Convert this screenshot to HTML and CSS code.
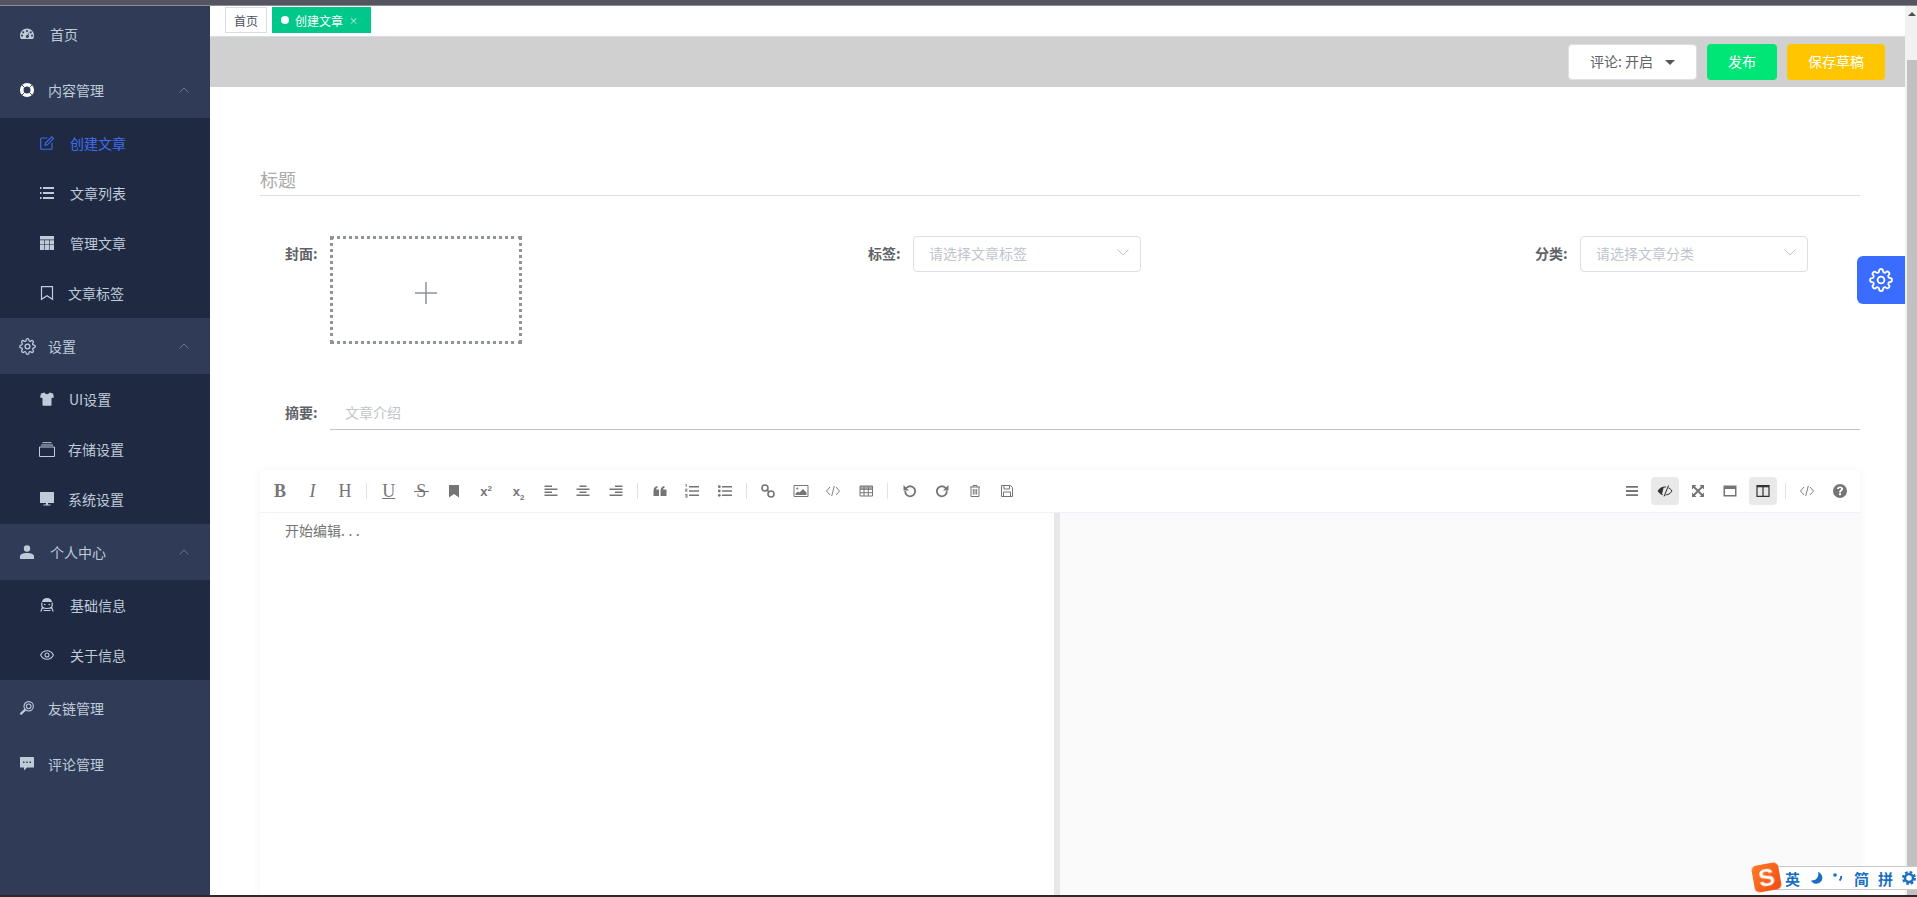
FILE: index.html
```html
<!DOCTYPE html>
<html lang="zh-CN">
<head>
    <meta charset="UTF-8">
    <title>创建文章</title>
    <link rel="stylesheet" href="styles.css">
</head>
<body>
    <svg class="sprite" xmlns="http://www.w3.org/2000/svg">
        <symbol id="i-gear" viewBox="0 0 24 24"><circle cx="12" cy="12" r="3.4" fill="none" stroke="currentColor" stroke-width="1.8"/><path fill="none" stroke="currentColor" stroke-width="1.8" d="M19.4 15a1.65 1.65 0 0 0 .33 1.82l.06.06a2 2 0 0 1-2.83 2.83l-.06-.06a1.65 1.65 0 0 0-1.82-.33 1.65 1.65 0 0 0-1 1.51V21a2 2 0 0 1-4 0v-.09A1.65 1.65 0 0 0 9 19.4a1.65 1.65 0 0 0-1.82.33l-.06.06a2 2 0 0 1-2.83-2.83l.06-.06a1.65 1.65 0 0 0 .33-1.82 1.65 1.65 0 0 0-1.51-1H3a2 2 0 0 1 0-4h.09A1.65 1.65 0 0 0 4.6 9a1.65 1.65 0 0 0-.33-1.82l-.06-.06a2 2 0 0 1 2.83-2.83l.06.06a1.65 1.65 0 0 0 1.82.33H9a1.65 1.65 0 0 0 1-1.51V3a2 2 0 0 1 4 0v.09a1.65 1.65 0 0 0 1 1.51 1.65 1.65 0 0 0 1.82-.33l.06-.06a2 2 0 0 1 2.83 2.83l-.06.06a1.65 1.65 0 0 0-.33 1.82V9a1.65 1.65 0 0 0 1.51 1H21a2 2 0 0 1 0 4h-.09a1.65 1.65 0 0 0-1.51 1z"/></symbol>
        <symbol id="i-chevron" viewBox="0 0 10 6"><path d="M.5 5.5 5 1l4.5 4.5" fill="none" stroke="currentColor"/></symbol>
        <symbol id="i-code" viewBox="0 0 16 16"><path d="M5 4 1.5 8 5 12M11 4l3.5 4-3.5 4M9.3 3 6.700 13" fill="none" stroke="currentColor"/></symbol>
    </svg>

    <div class="top-strip"></div>

    <div class="app">
        <aside class="sidebar">
            <a class="nav-item">
                <svg class="nav-icon" viewBox="0 0 14 14"><path fill="currentColor" fill-rule="evenodd" d="M7 1.500a7 7 0 0 1 7 7c0 1.500-.4 2.700-1 3.500H1c-.6-.8-1-2-1-3.500a7 7 0 0 1 7-7zM3.200 4.300a1 1 0 1 0 .01 0zM7 3a1 1 0 1 0 .01 0zM10.800 4.300a1 1 0 1 0 .01 0zM2 7.500a1 1 0 1 0 .01 0zM12 7.500a1 1 0 1 0 .01 0zM9.500 4.800 7.500 8a1.500 1.500 0 1 0 1 .5z"/></svg>
                <span>首页</span>
            </a>

            <a class="nav-item gap-s is-open">
                <svg class="nav-icon" viewBox="0 0 14 14"><circle cx="7" cy="7" r="5.300" fill="none" stroke="#fff" stroke-width="3.600"/><path d="m1.500 1.500 3 3M12.500 1.500l-3 3M1.500 12.500l3-3M12.500 12.500l-3-3" stroke="#2f3b57" stroke-width=".9"/></svg>
                <span>内容管理</span>
                <svg class="chevron"><use href="#i-chevron"/></svg>
            </a>
            <div class="submenu">
                <a class="sub-item is-active">
                    <svg class="nav-icon" viewBox="0 0 14 14"><path d="M7.500 2H1.700a1 1 0 0 0-1 1v9.300a1 1 0 0 0 1 1H11a1 1 0 0 0 1-1V7" fill="none" stroke="currentColor" stroke-width="1.100"/><path d="M5 9.300 5.500 7l6.200-6.200 1.800 1.800L7.300 8.800z" fill="none" stroke="currentColor" stroke-width="1.100"/></svg>
                    <span>创建文章</span>
                </a>
                <a class="sub-item">
                    <svg class="nav-icon" viewBox="0 0 14 14"><path fill="currentColor" d="M0 1h1.500v2H0zM3 1h11v2H3zM0 6h1.500v2H0zM3 6h11v2H3zM0 11h1.500v2H0zM3 11h11v2H3z"/></svg>
                    <span>文章列表</span>
                </a>
                <a class="sub-item">
                    <svg class="nav-icon" viewBox="0 0 14 14"><path fill="currentColor" d="M0 0h14v3.500H0zM0 4.200h4.300v4.300H0zM4.900 4.200h4.200v4.300H4.900zM9.700 4.200H14v4.300H9.700zM0 9.100h4.300V14H0zM4.900 9.100h4.200V14H4.900zM9.700 9.100H14V14H9.700z"/></svg>
                    <span>管理文章</span>
                </a>
                <a class="sub-item gap-s">
                    <svg class="nav-icon" viewBox="0 0 14 14"><path d="M1.500.7h11v12.600L7 9.800l-5.500 3.500z" fill="none" stroke="currentColor" stroke-width="1.200"/></svg>
                    <span>文章标签</span>
                </a>
            </div>

            <a class="nav-item gap-s is-open">
                <svg class="nav-icon nav-icon-gear"><use href="#i-gear"/></svg>
                <span>设置</span>
                <svg class="chevron"><use href="#i-chevron"/></svg>
            </a>
            <div class="submenu">
                <a class="sub-item gap-m">
                    <svg class="nav-icon" viewBox="0 0 14 14"><path fill="currentColor" d="M4.500.5C5 1.700 6 2.200 7 2.200S9 1.700 9.500.5L13 1.500 14 5.500l-2.500.5V13a.7.7 0 0 1-.7.700H3.200A.7.7 0 0 1 2.500 13V6L0 5.500l1-4z"/></svg>
                    <span>UI设置</span>
                </a>
                <a class="sub-item gap-s">
                    <svg class="nav-icon nav-icon-wide" viewBox="0 0 16 15"><path d="M.5 5h15v9.500H.5zM2 3h12M3.500 .7h9" fill="none" stroke="currentColor"/></svg>
                    <span>存储设置</span>
                </a>
                <a class="sub-item gap-s">
                    <svg class="nav-icon" viewBox="0 0 14 14"><path fill="currentColor" d="M.5 0h13a.5.5 0 0 1 .5.500V10.500a.5.500 0 0 1-.5.500H8v1.500h2.500v1h-7v-1H6V11H.5a.5.500 0 0 1-.5-.500V.5A.5.5 0 0 1 .5 0z"/></svg>
                    <span>系统设置</span>
                </a>
            </div>

            <a class="nav-item is-open">
                <svg class="nav-icon" viewBox="0 0 14 14"><circle cx="7" cy="3.500" r="3.200" fill="currentColor"/><path fill="currentColor" d="M0 14v-2.500C0 9.300 2.500 8 7 8s7 1.300 7 3.500V14z"/></svg>
                <span>个人中心</span>
                <svg class="chevron"><use href="#i-chevron"/></svg>
            </a>
            <div class="submenu">
                <a class="sub-item">
                    <svg class="nav-icon" viewBox="0 0 14 14"><path fill="currentColor" d="M7 0c3 0 5 1.700 5 4H2c0-2.300 2-4 5-4z"/><path d="M1.800 4.500v3c0 1.800 2 3 5.200 3s5.200-1.200 5.200-3v-3M2.500 9 .8 13.500M11.500 9l1.700 4.500M3.500 12.500h7" fill="none" stroke="currentColor" stroke-width="1.200"/><circle cx="4.700" cy="6.500" r=".8" fill="currentColor"/><circle cx="9.300" cy="6.500" r=".8" fill="currentColor"/></svg>
                    <span>基础信息</span>
                </a>
                <a class="sub-item">
                    <svg class="nav-icon" viewBox="0 0 14 14"><path d="M.6 7C2 4.200 4.300 2.800 7 2.800s5 1.400 6.400 4.200C12 9.800 9.700 11.200 7 11.200S2 9.800.6 7z" fill="none" stroke="currentColor" stroke-width="1.100"/><circle cx="7" cy="7" r="2" fill="none" stroke="currentColor" stroke-width="1.100"/></svg>
                    <span>关于信息</span>
                </a>
            </div>

            <a class="nav-item gap-s">
                <svg class="nav-icon" viewBox="0 0 15 15"><circle cx="9.300" cy="5.700" r="5" fill="none" stroke="currentColor" stroke-width="1.200"/><circle cx="9.300" cy="5.700" r="2.500" fill="none" stroke="currentColor" stroke-width="1.100"/><path d="M5.500 9.300 1.200 13.500" stroke="currentColor" stroke-width="2.400" stroke-linecap="round"/></svg>
                <span>友链管理</span>
            </a>
            <a class="nav-item gap-s">
                <svg class="nav-icon" viewBox="0 0 14 14"><path fill="currentColor" fill-rule="evenodd" d="M.5 0h13a.5.5 0 0 1 .5.500V10a.5.500 0 0 1-.5.500H7L4 13.500V10.500H.5A.5.500 0 0 1 0 10V.5A.5.500 0 0 1 .5 0zM3 4.500v1.500h1.500V4.500zM6.200 4.500v1.500h1.500V4.500zM9.500 4.500v1.500H11V4.500z"/></svg>
                <span>评论管理</span>
            </a>
        </aside>

        <main class="main">
            <div class="tabs">
                <span class="tab">首页</span>
                <span class="tab tab-active"><i class="tab-dot"></i>创建文章<i class="tab-close">×</i></span>
            </div>

            <div class="action-bar">
                <div class="comment-select">评论: 开启<i class="caret"></i></div>
                <button class="btn btn-publish">发布</button>
                <button class="btn btn-draft">保存草稿</button>
            </div>

            <div class="content">
                <div class="title-input">标题</div>

                <div class="meta-row">
                    <div class="field">
                        <label class="field-label">封面:</label>
                        <div class="cover-box">
                            <svg class="cover-plus" viewBox="0 0 24 24"><path d="M12 1v22M1 12h22" stroke="currentColor" stroke-width="1.500"/></svg>
                        </div>
                    </div>
                    <div class="field">
                        <label class="field-label">标签:</label>
                        <div class="select">请选择文章标签<svg class="select-arrow" viewBox="0 0 12 7"><path d="m.5.5 5.500 5.500L11.500.5" fill="none" stroke="currentColor"/></svg></div>
                    </div>
                    <div class="field">
                        <label class="field-label">分类:</label>
                        <div class="select">请选择文章分类<svg class="select-arrow" viewBox="0 0 12 7"><path d="m.5.5 5.500 5.500L11.500.5" fill="none" stroke="currentColor"/></svg></div>
                    </div>
                </div>

                <div class="field summary-row">
                    <label class="field-label">摘要:</label>
                    <div class="summary-input">文章介绍</div>
                </div>

                <div class="editor">
                    <div class="editor-toolbar">
                        <div class="tool-group">
                            <span class="tool tool-b">B</span>
                            <span class="tool tool-i">I</span>
                            <span class="tool tool-h">H</span>
                            <i class="tool-sep"></i>
                            <span class="tool tool-u">U</span>
                            <span class="tool tool-s">S</span>
                            <span class="tool"><svg viewBox="0 0 16 16"><path fill="currentColor" d="M3 2h10v12.500l-5-3.500-5 3.500z"/></svg></span>
                            <span class="tool tool-x"><span>x<sup>2</sup></span></span>
                            <span class="tool tool-x"><span>x<sub>2</sub></span></span>
                            <span class="tool"><svg viewBox="0 0 16 16"><path fill="currentColor" d="M1.500 2.500H9V4H1.500zM1.500 5.500h13V7h-13zM1.500 8.500H9V10H1.500zM1.500 11.500h13V13h-13z"/></svg></span>
                            <span class="tool"><svg viewBox="0 0 16 16"><path fill="currentColor" d="M4.500 2.500h7V4h-7zM1.500 5.500h13V7h-13zM4.500 8.500h7V10h-7zM1.500 11.500h13V13h-13z"/></svg></span>
                            <span class="tool"><svg viewBox="0 0 16 16"><path fill="currentColor" d="M7 2.500h7.500V4H7zM1.500 5.500h13V7h-13zM7 8.500h7.500V10H7zM1.500 11.500h13V13h-13z"/></svg></span>
                            <i class="tool-sep"></i>
                            <span class="tool"><svg viewBox="0 0 16 16"><path fill="currentColor" d="M1.500 8c0-3 1.500-4.700 4-5v1.800C4.500 5 4 5.700 4 6.500h3V13H1.500zM8.500 8c0-3 1.500-4.700 4-5v1.800c-1 .2-1.500.9-1.500 1.700h3.500V13h-6z"/></svg></span>
                            <span class="tool"><svg viewBox="0 0 16 16"><path fill="currentColor" d="M5 3h10v1.500H5zM5 7.200h10v1.500H5zM5 11.500h10V13H5zM1.500 1h1.200v3H1.800V2H1.500zM1 5.800h2.500v.8l-1.500 1h1.500v.8H1v-.8l1.500-1H1zM1 11h2.500v3.600H1v-.8h1.600v-.6H1.500v-.7h1.100v-.7H1z"/></svg></span>
                            <span class="tool"><svg viewBox="0 0 16 16"><path fill="currentColor" d="M5 3h10v1.500H5zM5 7.200h10v1.500H5zM5 11.500h10V13H5z"/><circle cx="2.300" cy="3.700" r="1.400" fill="currentColor"/><circle cx="2.300" cy="8" r="1.400" fill="currentColor"/><circle cx="2.300" cy="12.300" r="1.400" fill="currentColor"/></svg></span>
                            <i class="tool-sep"></i>
                            <span class="tool"><svg viewBox="0 0 16 16"><circle cx="5" cy="5" r="3" fill="none" stroke="currentColor" stroke-width="1.600"/><circle cx="11" cy="11" r="3" fill="none" stroke="currentColor" stroke-width="1.600"/><path d="m6.500 6.500 3 3" stroke="currentColor" stroke-width="1.600"/></svg></span>
                            <span class="tool"><svg viewBox="0 0 16 16"><path d="M1 2.500h14v11H1z" fill="none" stroke="currentColor"/><circle cx="4.300" cy="5.500" r="1.100" fill="currentColor"/><path fill="currentColor" d="M2.500 12v-1.500l2.500-2 1.500 1 3.500-3.500 3.500 3.500V12z"/></svg></span>
                            <span class="tool tool-thin"><svg><use href="#i-code"/></svg></span>
                            <span class="tool"><svg viewBox="0 0 16 16"><path d="M2 3h12.500v10H2zM2 6.300h12.500M2 9.700h12.500M6 3.500v9.500M10.300 3.500v9.500" fill="none" stroke="currentColor"/><path fill="currentColor" d="M2 3h12.500v3H2z" opacity=".6"/></svg></span>
                            <i class="tool-sep"></i>
                            <span class="tool"><svg viewBox="0 0 16 16"><path d="M3.200 8a5 5 0 1 0 1.600-3.400L3.200 6" fill="none" stroke="currentColor" stroke-width="1.800"/><path fill="currentColor" d="M1.500 2v5.500H7z"/></svg></span>
                            <span class="tool"><svg viewBox="0 0 16 16"><path d="M12.800 8a5 5 0 1 1-1.600-3.400L12.800 6" fill="none" stroke="currentColor" stroke-width="1.800"/><path fill="currentColor" d="M14.500 2v5.500H9z"/></svg></span>
                            <span class="tool"><svg viewBox="0 0 16 16"><path d="M3 4h10M6 4V2.500h4V4M4 4v9.500h8V4M6.300 6v5.500M8 6v5.500M9.700 6v5.500" fill="none" stroke="currentColor"/></svg></span>
                            <span class="tool"><svg viewBox="0 0 16 16"><path d="M2.500 2.500h9l2 2v9h-11zM5 2.500v3.500h5.500V2.500M4.500 13.500V9h7v4.500" fill="none" stroke="currentColor"/></svg></span>
                        </div>
                        <div class="tool-group tool-group-right">
                            <span class="tool"><svg viewBox="0 0 16 16"><path fill="currentColor" d="M2 3h12v1.800H2zM2 7.100h12v1.800H2zM2 11.200h12V13H2z"/></svg></span>
                            <span class="tool tool-on"><svg viewBox="0 0 16 16"><path d="M1 8c1.500-2.500 4-4 7-4s5.500 1.500 7 4c-1.500 2.500-4 4-7 4s-5.500-1.500-7-4z" fill="none" stroke="currentColor"/><path fill="currentColor" d="M1 8c1.300-2.200 3.300-3.600 5.800-3.900L4.900 11.200C3.300 10.700 2 9.500 1 8z"/><path d="M11 2.500 6.500 13.500" stroke="#e9e9e9" stroke-width="2.500"/><path d="M11.500 2.500 7 13.500" stroke="currentColor"/></svg></span>
                            <span class="tool"><svg viewBox="0 0 16 16"><path d="m3.500 3.500 9 9M12.500 3.500l-9 9" stroke="currentColor" stroke-width="2"/><path fill="currentColor" d="M2 2h4.500L2 6.500zM14 2v4.500L9.500 2zM2 14V9.500L6.500 14zM14 14H9.500L14 9.500z"/></svg></span>
                            <span class="tool"><svg viewBox="0 0 16 16"><path fill="currentColor" fill-rule="evenodd" d="M1.500 2.500h13v11h-13zM3 6v6h10V6z"/></svg></span>
                            <span class="tool tool-on"><svg viewBox="0 0 16 16"><path d="M2 2.700h12v10.600H2zM8 3v10" fill="none" stroke="#333" stroke-width="1.200"/><path d="M2 2.700h12v1.600H2z" fill="#333"/></svg></span>
                            <i class="tool-sep"></i>
                            <span class="tool tool-thin"><svg><use href="#i-code"/></svg></span>
                            <span class="tool"><svg viewBox="0 0 16 16"><path fill="currentColor" fill-rule="evenodd" d="M8 1a7 7 0 1 1 0 14A7 7 0 0 1 8 1zM7 10.300v1.900h2v-1.900zM8 3.500c-1.700 0-2.900 1-3 2.600h1.900c.1-.6.500-1 1.100-1 .6 0 1 .4 1 .9 0 1-2 1.300-2 3.400H9c0-1.400 2.100-1.700 2.100-3.600C11.100 4.500 9.800 3.500 8 3.500z"/></svg></span>
                        </div>
                    </div>
                    <div class="editor-body">
                        <div class="editor-input">开始编辑<span class="dots">...</span></div>
                        <div class="editor-preview"></div>
                    </div>
                </div>
            </div>

            <div class="settings-fab"><svg><use href="#i-gear"/></svg></div>
        </main>

        <div class="scrollbar">
            <i class="scroll-up"></i>
            <div class="scroll-thumb"></div>
        </div>
    </div>

    <div class="bottom-strip"></div>

    <div class="ime-bar">
        <span class="ime-logo"><b>S</b></span>
        <span class="ime-item">英</span>
        <svg class="ime-moon" viewBox="0 0 14 14"><path fill="currentColor" d="M8 1A6 6 0 1 1 1 9.500 6.500 6.500 0 0 0 8 1z"/></svg>
        <svg class="ime-punct" viewBox="0 0 10 12"><circle cx="2" cy="3" r="1.800" fill="currentColor"/><path d="M8 4c.5 2-.3 3.500-1.500 4.500" fill="none" stroke="currentColor" stroke-width="1.800"/></svg>
        <span class="ime-item">简</span>
        <span class="ime-item">拼</span>
        <svg class="ime-gear" viewBox="0 0 14 14"><circle cx="7" cy="7" r="4" fill="none" stroke="currentColor" stroke-width="2.500"/><circle cx="7" cy="7" r="6" fill="none" stroke="currentColor" stroke-width="2" stroke-dasharray="2.700 2"/></svg>
    </div>
</body>
</html>
```

FILE: styles.css
```css
* {
    margin: 0;
    padding: 0;
    box-sizing: border-box;
}

html, body {
    height: 100%;
    overflow: hidden;
}

body {
    display: flex;
    flex-direction: column;
    background: #fff;
    color: #606266;
    font-family: "Noto Sans CJK SC", "Liberation Sans", sans-serif;
    font-size: 14px;
}

i {
    font-style: normal;
}

.sprite {
    display: none;
}

.top-strip {
    height: 6px;
    flex: none;
    background: #55555f;
    border-bottom: 1px solid #8d8d94;
}

.bottom-strip {
    height: 2px;
    flex: none;
    background: #2b2b2b;
}

.app {
    flex: 1;
    display: flex;
    min-height: 0;
}

/* sidebar */
.sidebar {
    width: 210px;
    flex: none;
    background: #2f3b57;
    color: #bfcbd9;
}

.nav-item,
.sub-item {
    display: flex;
    align-items: center;
    gap: 16px;
}

.nav-item {
    height: 56px;
    padding-left: 20px;
    position: relative;
}

.sub-item {
    height: 50px;
    padding-left: 40px;
}

.nav-item.gap-s,
.sub-item.gap-s {
    gap: 14px;
}

.sub-item.gap-m {
    gap: 15px;
}

.submenu {
    background: #1f2a42;
}

.sub-item.is-active {
    color: #3f6df0;
}

.nav-icon {
    width: 14px;
    height: 14px;
    flex: none;
    overflow: visible;
    color: #bfcbd9;
}

.is-active .nav-icon {
    color: #3f6df0;
}

.nav-icon-gear {
    width: 17px;
    height: 17px;
    margin-left: -1px;
    margin-right: -2px;
}

.nav-icon-wide {
    width: 16px;
    height: 15px;
    margin-left: -1px;
    margin-right: -1px;
}

.chevron {
    position: absolute;
    left: 179px;
    top: 25px;
    width: 10px;
    height: 6px;
    color: #687388;
}

/* main area */
.main {
    flex: 1;
    min-width: 0;
    position: relative;
    overflow: hidden;
}

.tabs {
    height: 31px;
    display: flex;
    align-items: flex-start;
    gap: 5px;
    padding: 1px 0 0 15px;
    border-bottom: 1px solid #d8dce5;
}

.tab {
    height: 26px;
    display: flex;
    align-items: center;
    padding: 0 8px;
    border: 1px solid #d8dce5;
    font-size: 12px;
    color: #495060;
}

.tab-active {
    width: 99px;
    border-color: #00c78a;
    background: #00c78a;
    color: #fff;
}

.tab-dot {
    width: 8px;
    height: 8px;
    margin-right: 6px;
    border-radius: 50%;
    background: #fff;
}

.tab-close {
    margin-left: 6px;
    font-size: 9px;
    opacity: 0.8;
}

.action-bar {
    height: 50px;
    display: flex;
    align-items: center;
    justify-content: flex-end;
    gap: 10px;
    padding: 0 20px 0 0;
    background: #d0d0d0;
}

.comment-select {
    width: 129px;
    height: 36px;
    display: flex;
    align-items: center;
    padding: 0 0 2px 21px;
    background: #fff;
    border: 1px solid #dcdfe6;
    border-radius: 4px;
    color: #606266;
}

.caret {
    margin: 2px 0 0 12px;
    border-style: solid;
    border-width: 5px 5px 0;
    border-color: #555 transparent transparent;
}

.btn {
    height: 36px;
    padding-bottom: 2px;
    border: none;
    border-radius: 4px;
    color: #fff;
    font-family: inherit;
    font-size: 14px;
}

.btn-publish {
    width: 70px;
    background: #00e676;
}

.btn-draft {
    width: 98px;
    background: #ffc600;
}

.content {
    padding: 68px 45px 0 50px;
}

.title-input {
    height: 41px;
    padding-top: 11px;
    border-bottom: 1px solid #e0e0e0;
    font-size: 18px;
    line-height: 26px;
    color: #aaa;
}

.meta-row {
    display: grid;
    grid-template-columns: 583px 667px 1fr;
    margin-top: 40px;
    padding-left: 25px;
}

.meta-row .field-label {
    line-height: 34px;
}

.field {
    display: flex;
    align-items: flex-start;
    gap: 13px;
}

.field-label {
    width: 32px;
    flex: none;
    line-height: 36px;
    font-weight: 700;
    color: #606266;
    white-space: nowrap;
}

.cover-box {
    width: 192px;
    height: 108px;
    display: flex;
    align-items: center;
    justify-content: center;
    border: 3px dotted #8f939e;
}

.cover-plus {
    width: 24px;
    height: 24px;
    margin-top: 5px;
    color: #8f939e;
}

.select {
    width: 228px;
    height: 36px;
    display: flex;
    align-items: center;
    justify-content: space-between;
    padding: 0 11px 2px 15px;
    border: 1px solid #dcdfe6;
    border-radius: 4px;
    color: #c0c4cc;
}

.select-arrow {
    width: 12px;
    height: 7px;
    margin-bottom: 2px;
}

.summary-row {
    margin-top: 50px;
    padding-left: 25px;
    align-items: flex-end;
}

.summary-input {
    flex: 1;
    height: 34px;
    padding-left: 15px;
    border-bottom: 1px solid #c0c4cc;
    line-height: 32px;
    color: #c0c4cc;
}

.editor {
    height: 470px;
    margin-top: 40px;
    border-radius: 4px 4px 0 0;
    background: #fff;
    box-shadow: 0 0 10px rgba(0, 0, 0, 0.05);
}

.editor-toolbar {
    height: 43px;
    display: flex;
    align-items: center;
    justify-content: space-between;
    padding: 0 6px 0 6px;
    border-bottom: 1px solid #f1f1fb;
}

.tool-group {
    display: flex;
    align-items: center;
    gap: 4.45px;
}

.tool-group-right {
    gap: 4.7px;
}

.tool {
    width: 28px;
    height: 28px;
    display: flex;
    align-items: center;
    justify-content: center;
    border-radius: 4px;
    color: #757575;
    font-size: 16px;
    line-height: 1;
}

.tool svg {
    width: 16px;
    height: 16px;
}

.tool-b, .tool-i, .tool-h, .tool-u, .tool-s {
    font-family: "Liberation Serif", serif;
    font-size: 18px;
}

.tool-b {
    font-weight: 700;
}

.tool-i {
    font-style: italic;
}

.tool-u {
    text-decoration: underline;
}

.tool-s {
    background: linear-gradient(#757575, #757575) center / 15px 1px no-repeat;
}

.tool-x {
    font-family: "Liberation Sans", sans-serif;
    font-size: 13px;
    font-weight: 700;
}

.tool-x sup,
.tool-x sub {
    font-size: 8px;
    line-height: 0;
}

.tool-thin svg {
    color: #808080;
}

.tool-on {
    background: #e9e9e9;
    color: #333;
}

.tool-sep {
    width: 1px;
    height: 16px;
    margin: 0 3px;
    background: #e2e2e2;
}

.editor-body {
    height: calc(100% - 43px);
    display: flex;
}

.editor-input {
    width: 800px;
    padding: 6px 0 0 25px;
    border-right: 6px solid #e8e8e8;
    line-height: 22px;
    color: #757575;
}

.dots {
    letter-spacing: 3.5px;
}

.editor-preview {
    flex: 1;
    background: #fafafa;
}

.settings-fab {
    position: absolute;
    right: 0;
    top: 250px;
    width: 48px;
    height: 48px;
    display: flex;
    align-items: center;
    justify-content: center;
    border-radius: 6px 0 0 6px;
    background: #3a6cff;
    color: #fff;
}

.settings-fab svg {
    width: 24px;
    height: 24px;
}

/* scrollbar on the right */
.scrollbar {
    width: 12px;
    flex: none;
    position: relative;
    padding-top: 54px;
    background: #f1f1f1;
}

.scroll-up {
    position: absolute;
    left: 3px;
    top: 6px;
    border-style: solid;
    border-width: 0 4px 4px;
    border-color: transparent transparent #505050;
}

.scroll-thumb {
    height: 100%;
    margin-left: 2px;
    background: #c1c1c1;
}

/* input method bar, sits over everything */
.ime-bar {
    position: fixed;
    left: 1766px;
    right: 0;
    bottom: 7px;
    height: 24px;
    display: flex;
    align-items: center;
    padding-left: 18px;
    background: #fff;
    border: 1px solid #c8c8c8;
    border-right: none;
    color: #1a6fc0;
}

.ime-logo {
    position: absolute;
    left: -14px;
    top: -3px;
    width: 27px;
    height: 27px;
    display: flex;
    align-items: center;
    justify-content: center;
    border-radius: 5px;
    background: linear-gradient(135deg, #ff7a2b, #ee4d0f);
    transform: rotate(-10deg);
    color: #fff;
    font-family: "Liberation Sans", sans-serif;
    font-size: 24px;
}

.ime-item {
    font-size: 15px;
    font-weight: 700;
    line-height: 1;
}

.ime-moon {
    width: 14px;
    height: 14px;
    margin-left: 10px;
}

.ime-punct {
    width: 10px;
    height: 12px;
    margin: 0 11px 0 9px;
}

.ime-item + .ime-item {
    margin-left: 9px;
}

.ime-gear {
    width: 14px;
    height: 14px;
    margin-left: 9px;
    flex: none;
}
```
